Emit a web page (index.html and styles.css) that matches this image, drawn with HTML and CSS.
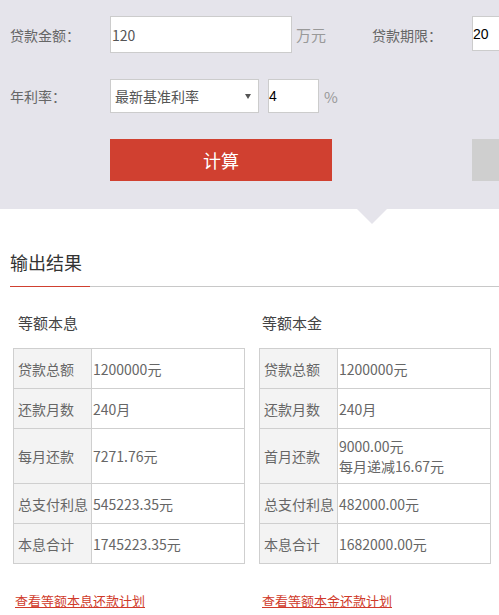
FILE: index.html
```html
<!DOCTYPE html>
<html lang="zh-CN">
<head>
<meta charset="utf-8">
<title>房贷计算器</title>
<link rel="stylesheet" href="styles.css">
</head>
<body>
<section class="calc">
  <div class="calc-inner">
    <div class="row">
      <span class="label">贷款金额：</span>
      <input class="field field-amount" type="text" value="120">
      <span class="unit">万元</span>
      <span class="label label-term">贷款期限：</span>
      <input class="field field-plain field-term" type="text" value="20">
    </div>
    <div class="row row-rate">
      <span class="label">年利率：</span>
      <div class="select">最新基准利率<span class="arrow"></span></div>
      <input class="field field-plain field-rate" type="text" value="4">
      <span class="unit unit-pct">%</span>
    </div>
    <div class="row row-btn">
      <button class="btn btn-calc" type="button">计算</button>
      <button class="btn btn-reset" type="button"></button>
    </div>
  </div>
  <span class="pointer"></span>
</section>

<section class="result">
  <h2 class="result-title">输出结果</h2>
  <div class="cols">
    <div class="col col-left">
      <h3 class="col-title">等额本息</h3>
      <table class="tbl">
        <tr><th>贷款总额</th><td>1200000元</td></tr>
        <tr><th>还款月数</th><td>240月</td></tr>
        <tr class="tall"><th>每月还款</th><td>7271.76元</td></tr>
        <tr><th>总支付利息</th><td>545223.35元</td></tr>
        <tr><th>本息合计</th><td>1745223.35元</td></tr>
      </table>
      <a class="plan" href="#">查看等额本息还款计划</a>
    </div>
    <div class="col col-right">
      <h3 class="col-title">等额本金</h3>
      <table class="tbl">
        <tr><th>贷款总额</th><td>1200000元</td></tr>
        <tr><th>还款月数</th><td>240月</td></tr>
        <tr class="tall"><th>首月还款</th><td>9000.00元<br>每月递减16.67元</td></tr>
        <tr><th>总支付利息</th><td>482000.00元</td></tr>
        <tr><th>本息合计</th><td>1682000.00元</td></tr>
      </table>
      <a class="plan" href="#">查看等额本金还款计划</a>
    </div>
  </div>
</section>
</body>
</html>
```

FILE: styles.css
```css
html, body {
  margin: 0;
  padding: 0;
  overflow: hidden;
  background: #fff;
}
body {
  width: 499px;
  font-family: "Noto Sans CJK SC", "Noto Sans", sans-serif;
  color: #666;
  font-size: 14px;
}

.calc {
  position: relative;
  background: #e5e4eb;
  height: 209px;
}
.calc-inner {
  overflow: hidden;
  height: 209px;
  padding: 16px 0 0 10px;
  box-sizing: border-box;
}
.row {
  display: flex;
  align-items: center;
  white-space: nowrap;
  height: 37px;
}
.row-rate {
  margin-top: 26px;
  height: 34px;
}
.row-btn {
  margin-top: 26px;
  height: 42px;
}
.label {
  flex: 0 0 100px;
  font-size: 14px;
  color: #666;
  line-height: 20px;
}
.label-term {
  margin-left: 46px;
}
.field {
  box-sizing: border-box;
  height: 37px;
  border: 1px solid #ccc;
  background: #fff;
  margin: 0;
  padding: 0 1px;
  font-family: "Noto Sans CJK SC", "Noto Sans", sans-serif;
  font-size: 14px;
  color: #555;
  outline: none;
}
.field-amount {
  flex: 0 0 182px;
  width: 182px;
}
.field-plain {
  font-family: "Liberation Sans", Arial, sans-serif;
  color: #000;
  padding: 0;
}
.field-term {
  flex: 0 0 120px;
  width: 120px;
  height: 35px;
  align-self: flex-start;
}
.field-rate {
  flex: 0 0 51px;
  width: 51px;
  height: 34px;
  margin-left: 9px;
}
.unit {
  margin-left: 4px;
  font-size: 15px;
  color: #999;
}
.unit-pct {
  margin-left: 5px;
}
.select {
  position: relative;
  box-sizing: border-box;
  flex: 0 0 149px;
  width: 149px;
  height: 34px;
  border: 1px solid #ccc;
  background: #fff;
  padding-left: 4px;
  line-height: 32px;
  font-size: 14px;
  color: #555;
}
.arrow {
  position: absolute;
  right: 7px;
  top: 14px;
  width: 0;
  height: 0;
  border-left: 3px solid transparent;
  border-right: 3px solid transparent;
  border-top: 5px solid #555;
}
.btn {
  border: 0;
  margin: 0;
  padding: 0;
  height: 42px;
  font-family: "Noto Sans CJK SC", "Noto Sans", sans-serif;
  cursor: pointer;
}
.btn-calc {
  margin-left: 100px;
  flex: 0 0 222px;
  width: 222px;
  background: #d04030;
  color: #fff;
  font-size: 18px;
}
.btn-reset {
  margin-left: 140px;
  flex: 0 0 100px;
  width: 100px;
  background: #cfcfcf;
}
.pointer {
  position: absolute;
  left: 357px;
  top: 209px;
  width: 0;
  height: 0;
  border-left: 15.5px solid transparent;
  border-right: 15.5px solid transparent;
  border-top: 15px solid #e5e4eb;
}

.result {
  padding-left: 10px;
}
.result-title {
  position: relative;
  margin: 41px 0 0;
  padding: 0 0 12px;
  font-size: 18px;
  line-height: 24px;
  font-weight: normal;
  color: #333;
  border-bottom: 1px solid #c8c8c8;
}
.result-title::after {
  content: "";
  position: absolute;
  left: 0;
  bottom: -1px;
  width: 80px;
  height: 1px;
  background: #d04030;
}
.cols {
  display: flex;
  padding-left: 3px;
}
.col {
  flex: 0 0 246px;
  width: 246px;
}
.col-title {
  margin: 26px 0 15px;
  font-size: 15px;
  line-height: 20px;
  font-weight: normal;
  color: #444;
}
.col-left .col-title { padding-left: 5px; }
.col-right .col-title { padding-left: 3px; }

.tbl {
  width: 232px;
  border-collapse: collapse;
  table-layout: fixed;
}
.tbl tr {
  height: 40px;
}
.tbl tr.tall {
  height: 55px;
}
.tbl th, .tbl td {
  border: 1px solid #cfcfcf;
  padding: 0;
  font-size: 14px;
  line-height: 20px;
  font-weight: normal;
  color: #666;
  text-align: left;
  white-space: nowrap;
}
.tbl th {
  width: 73px;
  padding-left: 4px;
  background: #f3f3f3;
}
.tbl td {
  padding-left: 1px;
}
.plan {
  display: inline-block;
  margin-top: 28px;
  font-size: 13px;
  line-height: 18px;
  color: #d03a2a;
  text-decoration: underline;
}
.col-left .plan { margin-left: 2px; }
.col-right .plan { margin-left: 3px; }
```
